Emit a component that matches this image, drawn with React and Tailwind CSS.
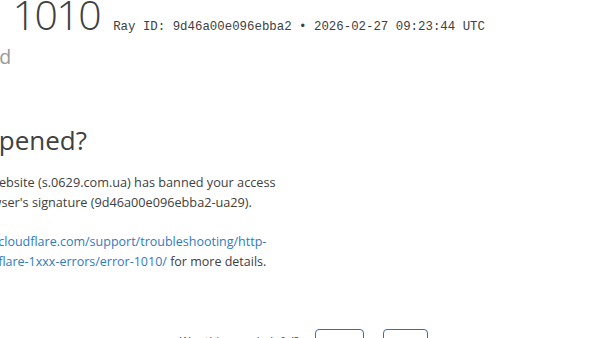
export default function App() {
  return (
    <div className="w-[600px] h-[338px] overflow-hidden bg-white text-[#404040] font-['Open_Sans','Noto_Sans',sans-serif]">
      <div className="ml-[-112px] w-[720px]">
        <h1 className="mt-[-7px] flex items-baseline whitespace-nowrap text-[41px] leading-[42px] font-light text-[#404040]">
          <span>Error</span>
          <span className="ml-[30px] tracking-[-1.5px]">1010</span>
          <small className="ml-[13px] text-[12.4px] leading-[16px] font-normal text-[#404040] font-['Liberation_Mono','Courier_New',monospace]">
            Ray ID: 9d46a00e096ebba2 &bull; 2026-02-27 09:23:44 UTC
          </small>
        </h1>
        <h2 className="mt-[10px] ml-[-5px] text-[19.5px] leading-[24px] font-normal text-[#999999] whitespace-nowrap">
          Access denied
        </h2>
        <h2 className="mt-[55px] ml-[-6px] text-[26px] leading-[32px] font-normal text-[#404040] whitespace-nowrap">
          What happened?
        </h2>
        <p className="mt-[16px] ml-[-5px] text-[12.7px] leading-[20px] whitespace-nowrap">
          The owner of this website (s.0629.com.ua) has banned your access
          <br />
          based on your browser&apos;s signature (9d46a00e096ebba2-ua29).
        </p>
        <p className="mt-0 text-[12.5px] leading-[20px] whitespace-nowrap">
          Please see
          <br />
          <a href="#" className="text-[#2f7bbf]">
            https://developers.cloudflare.com/support/troubleshooting/http-
            <br />
            status-codes/cloudflare-1xxx-errors/error-1010/
          </a>{" "}
          for more details.
        </p>
      </div>
      <div className="mt-[57px] flex items-start justify-end pr-[172px]">
        <span className="mt-[4px] mr-[16px] text-[11.5px] leading-[16px] text-[#404040] whitespace-nowrap">
          Was this page helpful?
        </span>
        <button className="w-[49px] h-[28px] border border-[#3b6ea5] rounded-[4px] text-[12px] text-[#3b6ea5]">
          Yes
        </button>
        <button className="ml-[19px] w-[45px] h-[28px] border border-[#3b6ea5] rounded-[4px] text-[12px] text-[#3b6ea5]">
          No
        </button>
      </div>
    </div>
  );
}
